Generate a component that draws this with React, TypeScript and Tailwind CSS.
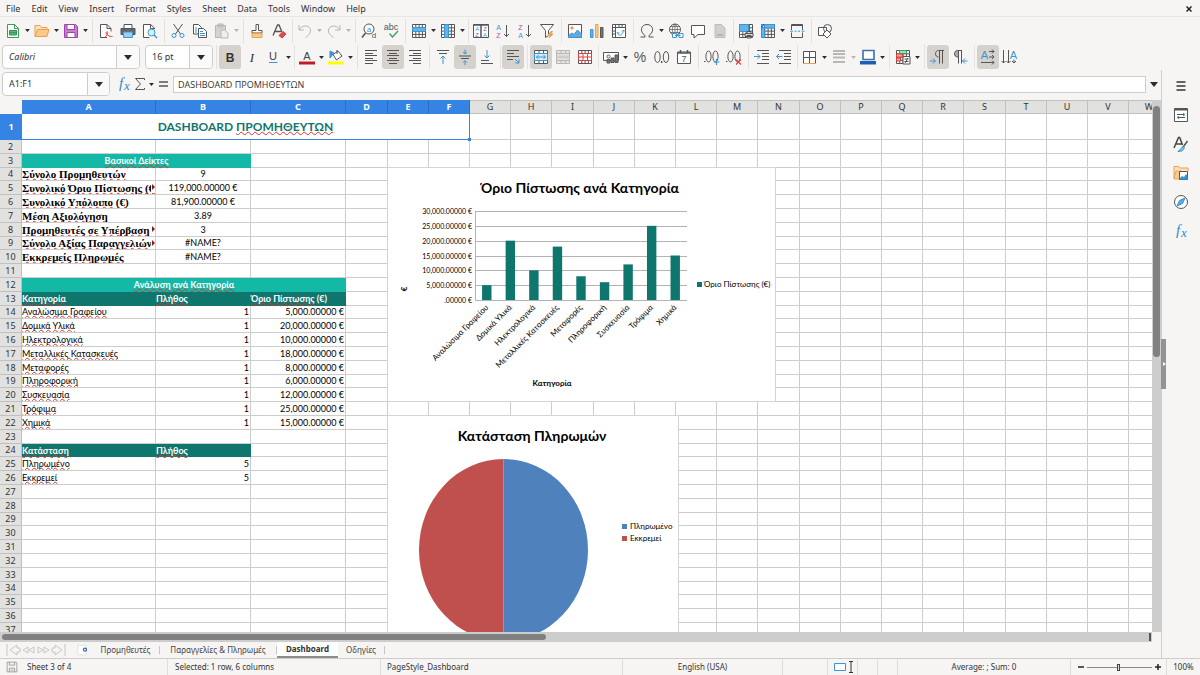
import type { ReactNode } from "react";

const K = "#555555";
const B = "#3a95d2";
const O = "#e9a24a";
const R = "#e0403f";
const P = "#a54fb3";
const G = "#b9b7b5";

const letter = (x: number, y: number, size: number, fill: string, s: string, weight = 400) => (
    <text x={x} y={y} fontSize={size} fill={fill} stroke="none" fontWeight={weight} textAnchor="middle">{s}</text>
);

const gridLines = "M1.5 1.5h13v13h-13zM1.5 4.8h13M1.5 8.1h13M1.5 11.4h13M4.8 1.5v13M8.1 1.5v13M11.4 1.5v13";

const icons: Record<string, ReactNode> = {
    new: <><path d="M2.500 1.500h7l4 4v9h-11z" fill="#fff" stroke="#3c9a5a" /><path d="M9.500 1.500v4h4" stroke="#3c9a5a" /><path d="M4.500 7.500h7v4.500h-7zM4.500 9.700h7" fill="#5fb878" stroke="#2f9350" /></>,
    open: <><path d="M1 13.500V2.500h5l1.500 2H13v2.500" stroke={O} fill="#fbe3bd" /><path d="M1 13.500l2.500-7H15l-2 7z" fill="#fbc98a" stroke={O} /></>,
    save: <><path d="M1.500 1.500h11l2 2v11h-13z" fill="#c77fd0" stroke="#9a45a8" /><path d="M4 1.500h7.500v5H4zM4 9.500h8v5H4z" fill="#fff" stroke="#9a45a8" /></>,
    pdf: <><path d="M9 14.500H2.500v-13H9l4 4v3" stroke={K} fill="#fff" /><path d="M9 1.500v4h4" stroke={K} /><path d="M7 14.500c3-3 3.500-7 1.500-5.500s2.500 5 6 4.500" stroke={R} /></>,
    print: <><path d="M4 5V1.500h8V5" stroke={K} fill="#fff" /><path d="M1 5.500h14v6H1z" fill="#666" stroke={K} /><path d="M3.500 9h9v5.500h-9z" fill="#9bd0f2" stroke={B} /></>,
    preview: <><path d="M12.500 6V5l-4-3.500h-7v13h6" stroke={K} fill="#fff" /><path d="M8.500 1.500v4h4" stroke={K} /><circle cx="9.500" cy="9.500" r="3.500" stroke={B} fill="#d8edfb" /><path d="M12 12l3 3" stroke={B} strokeWidth="1.500" /></>,
    cut: <><path d="M3.500 1l7 10M12.500 1l-7 10" stroke={K} /><circle cx="4" cy="12.500" r="2" stroke={B} /><circle cx="12" cy="12.500" r="2" stroke={B} /></>,
    copy: <><path d="M1.500 1.500h5l3 3v6.500h-8z" fill="#fff" stroke={K} /><path d="M6.500 5.500h5l3 3v6h-8z" fill="#fff" stroke={K} /><path d="M8 8.500h3M8 10.500h5M8 12.500h5M3 5h2M3 7h2M3 9h2" stroke={B} /></>,
    paste: <><path d="M1.500 2.500h10v12h-10zM4 1h5v3H4z" fill="#d5d3d1" stroke={G} /><path d="M7 7h4l3 3v5H7z" fill="#eee" stroke={G} /></>,
    clone: <><path d="M7 1.500h2.500v6h3.500v2.500H3V7.500h4z" stroke={K} fill="#fff" /><path d="M3 10.500h10v4H3z" fill="#fbc98a" stroke={O} /></>,
    clear: <><path d="M2 12.500L6.500 2h1.500l3 7M4 8.500h6" stroke={K} strokeWidth="1.300" /><path d="M8 12.500l4-4 3 2.500-4 4z" fill="#e8454a" stroke={R} /></>,
    undo: <path d="M2 2v5h5M2 7c3-6 12-5 11.500 1 0 3-2.500 4.500-5 6.500" stroke={G} />,
    redo: <path d="M14 2v5H9M14 7C11 1 2 2 2.500 8c0 3 2.500 4.500 5 6.500" stroke={G} />,
    find: <><circle cx="8" cy="6" r="5" stroke={K} fill="#fff" /><path d="M4.500 10L1 14.500" stroke={K} strokeWidth="1.600" />{letter(8, 8.500, 8, B, "a")}{letter(13, 15, 8, K, "d")}</>,
    spell: <>{letter(8, 6.500, 9, K, "abc")}<path d="M6.500 10.500l3 3.500L15 8" stroke="#36a15b" strokeWidth="1.300" /></>,
    row: <><path d={gridLines} stroke={K} fill="#fff" /><path d="M1.500 4.500h13v4h-13z" fill="#62b4e8" stroke={B} /></>,
    col: <><path d={gridLines} stroke={K} fill="#fff" /><path d="M4.500 1.500h4v13h-4z" fill="#62b4e8" stroke={B} /></>,
    sort: <><path d="M.5 1.500h15v13H.5z" fill="#fff" stroke={K} /><path d="M.5 2h15M8 2v13" stroke={K} strokeWidth="1.500" />{letter(4.200, 7.500, 6, B, "A")}{letter(4.200, 14, 6, P, "Z")}{letter(12, 7.500, 6, P, "Z")}{letter(12, 14, 6, B, "A")}</>,
    asc: <>{letter(3.500, 6.500, 7, B, "A")}{letter(3.500, 15, 7, P, "Z")}<path d="M11.500 2v11.500M9 11l2.500 2.500L14 11" stroke={K} /></>,
    desc: <>{letter(3.500, 6.500, 7, P, "Z")}{letter(3.500, 15, 7, B, "A")}<path d="M11.500 2v11.500M9 11l2.500 2.500L14 11" stroke={K} /></>,
    filter: <><path d="M1.500 1.500h13l-5 6v5l-3 2v-7z" stroke={K} fill="#fff" /><path d="M12 8.500l-3 3.500h2.500L10 15l4-4h-2.500l2-2.500z" fill={O} stroke={O} /></>,
    image: <><path d="M1.500 1.500h13v13h-13z" fill="#fff" stroke={K} /><circle cx="5" cy="5" r="1.200" fill={O} stroke={O} /><path d="M1.500 12.500L5 10l2 1.500L10.500 7l4 4v3.500h-13z" fill="#62a9dd" stroke={B} /></>,
    chart: <><path d="M1.500 6.500h2.500v8H1.500z" fill="#62b4e8" stroke={B} /><path d="M6.500 1.500H9v13H6.500z" fill="#fbc98a" stroke={O} /><path d="M11.500 4.500H14v10h-2.500z" fill="#777" stroke={K} /></>,
    pivot: <><path d="M1.500 1.500h13v13h-13zM1.500 4.500h13M4.500 1.500v13M8 1.500v3M11 1.500v3M1.500 8h3M1.500 11h3" fill="#fff" stroke={K} /><path d="M7 10.500c0 3 5 2 5.500-3.500M11 8.500L12.500 7 14 8.500M8.500 9L7 10.500 5.700 9" stroke={B} /></>,
    omega: <path d="M1.500 14h4.500v-1.500C0 8.500 2 1.500 8 1.500s8 7 2 11V14h4.500" stroke={K} />,
    link: <><circle cx="7" cy="6.500" r="5.500" stroke={K} fill="#fff" /><path d="M1.500 6.500h11M7 1v11M3 3.500h8M3 9.500h8M7 1c-3.500 3-3.500 8 0 11M7 1c3.500 3 3.500 8 0 11" stroke={K} strokeWidth=".7" /><path d="M4.500 10.500h4v4h-4zM11 10.500h4v4h-4zM7 12.500h5.500" fill="#fff" stroke={B} /></>,
    comment: <path d="M1.500 2.500h13v9H8l-4 3.500v-3.500H1.500z" fill="#fff" stroke={K} />,
    header: <><path d="M3 1.500h6.500L13 5v9.500H3z" fill="#d2d0ce" stroke="#c0bebc" /><path d="M5 11h6v2H5z" fill="#b8b6b4" /></>,
    printarea: <><path d={gridLines} stroke={K} fill="#fff" /><path d="M1.500 1.500h9v7h-9z" fill="#62b4e8" stroke={B} /><path d="M7 10.500h8v3H7zM9 8.500h4v2H9zM9 12.500h4V15H9z" fill="#ddd" stroke={K} /></>,
    freeze: <><path d={gridLines} stroke={K} fill="#fff" /><path d="M4.500 1.500h10v3.500h-10zM1.500 5h3v9.500h-3z" fill="#62b4e8" stroke={B} /><path d="M1 2.500h3M2.500 1v3" stroke={B} /></>,
    split: <><path d="M2.500 7V1.500h11V7M2.500 9.500v5h11v-5M2.500 2.500h11" stroke={K} /><path d="M1 8.200h3M5.500 8.200h2M9 8.200h2M12.500 8.200h3" stroke={B} /></>,
    shapes: <><path d="M1.500 4.500h8v8h-8z" fill="#fff" stroke={K} /><circle cx="10.500" cy="5.500" r="4" stroke={K} /><path d="M10 7l4 4-4 4-4-4z" fill="#fff" stroke={K} /></>,
    bold: letter(8, 12.500, 12, "#333", "B", 700),
    italic: <text x="8" y="12.500" fontSize="13" fill="#333" stroke="none" textAnchor="middle" fontFamily="Liberation Serif" fontStyle="italic">I</text>,
    underline: <>{letter(7, 11, 11, "#444", "U")}<path d="M3 13.500h8.500" stroke={B} /></>,
    color: <>{letter(8, 10.500, 11, "#444", "A")}<path d="M0 12.500h16v3H0z" fill="#c01c28" /></>,
    highlight: <><path d="M5 5.500L10 2l4 5-5.500 4z" fill="#fff" stroke={K} /><path d="M9 5V1" stroke={K} /><path d="M2 2v7l4-5z" fill={B} stroke={B} /><path d="M0 12.500h16v3H0z" fill="#ffff00" /></>,
    left: <path d="M2 1.500h12M2 4.500h8M2 6.500h12M2 9.500h8M2 11.500h12M2 14.500h8" stroke={K} />,
    center: <path d="M2 1.500h12M4 4.500h8M2 6.500h12M4 9.500h8M2 11.500h12M4 14.500h8" stroke={K} />,
    right: <path d="M2 1.500h12M6 4.500h8M2 6.500h12M6 9.500h8M2 11.500h12M6 14.500h8" stroke={K} />,
    top: <><path d="M2 1.500h12M4 4.500h8" stroke={K} /><path d="M8 15V7M5.500 9.500L8 7l2.500 2.500" stroke={B} /></>,
    middle: <><path d="M2 7h12M4 9.500h8" stroke={K} /><path d="M8 .5v4M6 3l2 2 2-2M8 16v-4M6 13.500l2-2 2 2" stroke={B} /></>,
    bottom: <><path d="M2 11.500h8M2 14.500h12" stroke={K} /><path d="M8 1v8M5.500 6.500L8 9l2.500-2.500" stroke={B} /></>,
    wrap: <><path d="M2 1.500h12M2 4.500h7M2 7.500h12M2 10.500h6" stroke={K} /><path d="M10 10l4 4M14 10.500V14h-3.500" stroke={B} /></>,
    merge: <><path d="M1.500 1.500h13v13h-13zM1.500 4.500h13M1.500 11.500h13M6 1.500v3M10.500 1.500v3M6 11.500v3M10.500 11.500v3" fill="#fff" stroke={K} /><path d="M1.500 4.500h13v7h-13z" fill="#d8edfb" stroke={B} /><path d="M3.500 8h9M5.500 6l-2 2 2 2M10.500 6l2 2-2 2" stroke={B} /></>,
    unmerge: <><path d="M1.500 1.500h13v13h-13zM1.500 4.500h13M1.500 11.500h13M6 1.500v3M10.500 1.500v3M6 11.500v3M10.500 11.500v3" fill="#e5e3e1" stroke={G} /><path d="M1.500 6.500h13v3h-13z" fill="#cfcdcb" /></>,
    cells: <><path d={gridLines} stroke={K} fill="#fff" /><path d="M1.500 4.500h13v7h-13zM1.500 8h13M6 4.500v7M10.500 4.500v7" fill="#fff" stroke={R} /></>,
    currency: <><path d="M.5 3.500h15v8H.5z" fill="#fff" stroke={K} /><circle cx="5.500" cy="7.500" r="1.500" stroke={K} /><path d="M8 9h3v4.500H8zM12 6h3v7.500h-3zM4 10.500h3V14H4z" fill="#777" stroke={K} /></>,
    percent: letter(8, 13, 14, K, "%"),
    number: <><ellipse cx="3.500" cy="8" rx="2.700" ry="5.500" stroke={K} /><ellipse cx="12" cy="8" rx="2.700" ry="5.500" stroke={K} /><path d="M7.700 12v2" stroke={K} strokeWidth="1.400" /></>,
    date: <><path d="M1.500 3h13v11.500h-13z" fill="#fff" stroke={K} /><path d="M1.500 4h13M4.500 1v3M11.500 1v3" stroke={K} strokeWidth="1.500" />{letter(8, 13, 9, K, "7")}</>,
    adddec: <><ellipse cx="4.500" cy="7.500" rx="2.600" ry="5.500" stroke={K} /><ellipse cx="11.500" cy="7.500" rx="2.600" ry="5.500" stroke={K} /><path d="M0 12.500h1.500" stroke={K} /><path d="M12.500 10v6M9.500 13h6" stroke={B} strokeWidth="1.200" /></>,
    deldec: <><ellipse cx="4.500" cy="7.500" rx="2.600" ry="5.500" stroke={K} /><ellipse cx="11.500" cy="7.500" rx="2.600" ry="5.500" stroke={K} /><path d="M0 12.500h1.500" stroke={K} /><path d="M10 10.500l5 5M15 10.500l-5 5" stroke={R} strokeWidth="1.200" /></>,
    indent: <><path d="M3 1.500h12M8 4.500h7M8 7.500h7M8 10.500h7M3 14.500h12" stroke={K} /><path d="M0 7.500h6M3.500 5L6 7.500 3.500 10" stroke={B} /></>,
    outdent: <><path d="M3 1.500h12M8 4.500h7M8 7.500h7M8 10.500h7M3 14.500h12" stroke={K} /><path d="M.5 7.500h6M3 5L.5 7.500 3 10" stroke={B} /></>,
    borders: <><path d="M1.500 14V2.500h12V14M7.500 2.500V14M1.500 8.500h12" fill="#fff" stroke={K} /><path d="M1 14.500h13" stroke={O} /></>,
    style: <path d="M2 2h12M2 5h12M2 8.500h12M2 13h12" stroke={G} strokeWidth="1.800" />,
    bcolor: <><path d="M3 1.500h11v9H3z" fill="#fff" stroke="#3b6fae" strokeWidth="1.600" /><path d="M0 12h16v3.500H0z" fill="#1a5fb4" /></>,
    cond: <><path d={gridLines} stroke={K} fill="#fff" /><path d="M4.500 1.500h7v3h-7z" fill="#a8dcb4" stroke="#36a15b" /><path d="M1.500 5h6v3h-6zM1.500 9h4v3h-4z" fill="#f5a3a0" stroke={R} /><path d="M8 7.500h7v7.500H8zM9.500 10h4M9.500 12.500h4M13 9l-3 5" fill="#fff" stroke={K} /></>,
    ltr: <><path d="M14 1.500H8.500C4.500 1.500 4.500 8 8.500 8M9.500 1.500v13M12.500 1.500v13" stroke={K} /><path d="M0 12h5M3 9.500L5.500 12 3 14.500" stroke={B} /></>,
    rtl: <><path d="M10 1.500H5.500C1.500 1.500 1.500 8 5.500 8h1V1.500z" fill="#aaa" stroke={K} /><path d="M6.500 1.500v13M9.500 1.500v13" stroke={K} /><path d="M15.500 12h-5M13 9.500L10.500 12l2.500 2.500" stroke={B} /></>,
    horiz: <>{letter(4.500, 10, 11, B, "A")}<path d="M9 2.500h5M12 .500l2 2-2 2M9 8h5M12 6l2 2-2 2M1 13.500h13M12 11.500l2 2-2 2" stroke={K} /></>,
    vert: <>{letter(11.500, 10, 11, B, "A")}<path d="M1.500 1v13M-.5 12l2 2 2-2M6.500 1v13M4.500 12l2 2 2-2M12 10.500V14M10 12l2 2 2-2" stroke={K} /></>,
    menu: <path d="M3.500 4h9M3.500 8h9M3.500 12h9" stroke="#333" strokeWidth="1.300" />,
    props: <><path d="M1.500 1.500h13v13h-13z" fill="#fff" stroke={K} /><path d="M1.500 2.500h13" stroke={K} strokeWidth="2" /><path d="M4 7.500h7M5 10.500h7" stroke={K} /><path d="M10 6l2 1.500L10 9M6 9L4 10.500 6 12" stroke={B} /></>,
    styles: <><path d="M1 12L5.500 1.500h1.200L9.500 9M3 8h6" stroke="#444" strokeWidth="1.500" /><path d="M14.500 5l-5 7" stroke={K} strokeWidth="1.500" /><path d="M10 10.500l1.500 1.500-2.500 3-4 .5z" fill="#8cc6ee" stroke={B} /></>,
    gallery: <><path d="M1 13V1.500h4.500l1 1.500H15v3" stroke={O} fill="#fbe3bd" /><path d="M1 13l2-7h5v8H1z" fill="#fbc98a" stroke={O} /><path d="M6.500 6.500h8v8h-8z" fill="#fff" stroke={K} /><path d="M6.500 13.500l2.500-2.500 2 1 2-3 1.500 2v3.500h-8z" fill={B} /></>,
    navigator: <><circle cx="8" cy="8" r="6.500" stroke={K} fill="#fff" /><path d="M12 4l-2.500 5.500L4 12l2.500-5.500z" fill="#5aa9e6" stroke={B} /></>,
    fx: <><text x="5" y="12" fontSize="15" fill="#2e8bd0" stroke="none" textAnchor="middle" fontFamily="Liberation Serif" fontStyle="italic">f</text><text x="11" y="13.500" fontSize="13" fill="#2e8bd0" stroke="none" textAnchor="middle" fontFamily="Liberation Serif" fontStyle="italic">x</text></>,
    sum: <path d="M12.500 4V2.500h-9l5 5.500-5 5.500h9V12" stroke={K} />,
    equals: <path d="M4 6h9M4 10h9" stroke={K} strokeWidth="1.600" />,
    disk: <path d="M1.500 1.500h12l1 1v12h-13zM4.500 1.500v4h7v-4M4.500 14.500v-5h7v5M6.500 12h3.500" stroke="#8a8886" />,
    sheet: <><path d="M2.500 1.500h11v13h-11z" fill="#fff" stroke="#dcdad8" /><circle cx="12" cy="7.500" r="2" stroke="#2560a8" strokeWidth="1.500" /></>,
};

function Icon({ name, small }: { name: string; small?: boolean }) {
    return (
        <svg viewBox="0 0 16 16" className={`shrink-0 overflow-visible ${small ? "size-3" : "size-4"}`} fill="none" fontFamily="Liberation Sans">
            {icons[name]}
        </svg>
    );
}

function Caret({ off, large }: { off?: boolean; large?: boolean }) {
    return (
        <svg viewBox="0 0 8 5" className={large ? "h-[5px] w-2" : "h-[3px] w-[5px]"}>
            <path d="M0 0h8L4 5z" fill={off ? "#b5b3b1" : "#2b2b2b"} />
        </svg>
    );
}

type Tool = { icon: string; label: string; menu?: boolean; on?: boolean; off?: boolean };
type Item = Tool | "|" | "¦";

const t = (icon: string, label: string, opts: Partial<Tool> = {}): Tool => ({ icon, label, ...opts });

// "|" is a normal divider, "¦" a narrow one
const standardBar: Item[] = [
    t("new", "New", { menu: true }), t("open", "Open", { menu: true }), t("save", "Save", { menu: true }), "|",
    t("pdf", "Export as PDF"), t("print", "Print"), t("preview", "Print Preview"), "|",
    t("cut", "Cut"), t("copy", "Copy"), t("paste", "Paste", { menu: true, off: true }), "|",
    t("clone", "Clone Formatting"), t("clear", "Clear Formatting"), "¦",
    t("undo", "Undo", { menu: true, off: true }), t("redo", "Redo", { menu: true, off: true }), "|",
    t("find", "Find and Replace"), t("spell", "Spelling"), "|",
    t("row", "Row", { menu: true }), t("col", "Column", { menu: true }), "¦",
    t("sort", "Sort"), t("asc", "Sort Ascending"), t("desc", "Sort Descending"), t("filter", "AutoFilter"), "|",
    t("image", "Insert Image"), t("chart", "Insert Chart"), t("pivot", "Insert Pivot Table"), "|",
    t("omega", "Special Character", { menu: true }), t("link", "Hyperlink"), t("comment", "Comment"), t("header", "Headers and Footers", { off: true }), "¦",
    t("printarea", "Define Print Area"), t("freeze", "Freeze Rows and Columns", { menu: true }), t("split", "Split Window"), "|",
    t("shapes", "Draw Functions"),
];

const formatBar: Item[] = [
    "|", t("bold", "Bold", { on: true }), t("italic", "Italic"), t("underline", "Underline", { menu: true }), "¦",
    t("color", "Font Color", { menu: true }), t("highlight", "Background Color", { menu: true }), "|",
    t("left", "Align Left"), t("center", "Center", { on: true }), t("right", "Align Right"), "|",
    t("top", "Align Top"), t("middle", "Center Vertically", { on: true }), t("bottom", "Align Bottom"), "¦",
    t("wrap", "Wrap Text", { on: true }), "|",
    t("merge", "Merge and Center", { on: true }), t("unmerge", "Merge Cells", { off: true }), t("cells", "Unmerge Cells"), "¦",
    t("currency", "Currency", { menu: true }), t("percent", "Percent"), t("number", "Number"), t("date", "Date"), "|",
    t("adddec", "Add Decimal Place"), t("deldec", "Delete Decimal Place"), "|",
    t("indent", "Increase Indent"), t("outdent", "Decrease Indent"), "¦",
    t("borders", "Borders", { menu: true }), t("style", "Border Style", { menu: true, off: true }), t("bcolor", "Border Color", { menu: true }), "|",
    t("cond", "Conditional", { menu: true }), "|",
    t("ltr", "Left-To-Right", { on: true }), t("rtl", "Right-To-Left"), "|",
    t("horiz", "Text direction left to right", { on: true }), t("vert", "Text direction top to bottom"),
];

function Tools({ items }: { items: Item[] }) {
    return (
        <>
            {items.map((item, i) => {
                if (item === "|" || item === "¦") {
                    return (
                        <div key={i} className={`flex h-6 shrink-0 justify-center ${item === "|" ? "w-1.5" : "w-1"}`}>
                            <div className="w-px bg-[#e4e2e0]" />
                        </div>
                    );
                }
                return (
                    <div key={i} className="flex shrink-0 items-center">
                        <button
                            aria-label={item.label}
                            disabled={item.off}
                            className={`flex h-6 w-[22px] items-center justify-center rounded-[3px] ${item.on ? "bg-[#d5d1cd]" : ""}`}
                        >
                            <Icon name={item.icon} />
                        </button>
                        {item.menu && (
                            <button aria-label={`${item.label} options`} disabled={item.off} className="flex h-6 w-[7px] items-center justify-center">
                                <Caret off={item.off} />
                            </button>
                        )}
                    </div>
                );
            })}
        </>
    );
}

function Combo({ label, value, width, italic }: { label: string; value: string; width: string; italic?: boolean }) {
    return (
        <div className={`relative flex h-6 shrink-0 items-center overflow-hidden rounded border border-[#cfccc9] bg-white ${width}`}>
            <select aria-label={label} className={`h-full w-full appearance-none pl-1.5 text-[9px] outline-none ${italic ? "italic" : ""}`}>
                <option>{value}</option>
            </select>
            <span className="pointer-events-none absolute inset-y-0 right-0 flex w-[23px] items-center justify-center border-l border-[#cfccc9] bg-[#fbfafa]">
                <Caret large />
            </span>
        </div>
    );
}

const menus = ["File", "Edit", "View", "Insert", "Format", "Styles", "Sheet", "Data", "Tools", "Window", "Help"];
const columns = "ABCDEFGHIJKLMNOPQRSTUVW".split("");

function columnWidth(i: number) {
    if (i === 0) return 134;
    if (i < 3) return 95;
    return i % 5 === 3 ? 42 : 41;
}

const indicators: [string, string, boolean][] = [
    ["Σύνολο Προμηθευτών", "9", false],
    ["Συνολικό Όριο Πίστωσης (€)", "119,000.00000 €", true],
    ["Συνολικό Υπόλοιπο (€)", "81,900.00000 €", false],
    ["Μέση Αξιολόγηση", "3.89", false],
    ["Προμηθευτές σε Υπέρβαση", "3", true],
    ["Σύνολο Αξίας Παραγγελιών", "#NAME?", true],
    ["Εκκρεμείς Πληρωμές", "#NAME?", false],
];

const categories: [string, number][] = [
    ["Αναλώσιμα Γραφείου", 5000],
    ["Δομικά Υλικά", 20000],
    ["Ηλεκτρολογικά", 10000],
    ["Μεταλλικές Κατασκευές", 18000],
    ["Μεταφορές", 8000],
    ["Πληροφορική", 6000],
    ["Συσκευασία", 12000],
    ["Τρόφιμα", 25000],
    ["Χημικά", 15000],
];

const statuses = ["Πληρωμένο", "Εκκρεμεί"];

const euro = (n: number) => (n ? n.toLocaleString("en-US") : "") + ".00000 €";

function Typo({ children }: { children: ReactNode }) {
    return <span className="underline decoration-[#e0302a] decoration-wavy decoration-1 underline-offset-0 [text-decoration-skip-ink:none]">{children}</span>;
}

const cell = "overflow-hidden whitespace-nowrap border-b border-r border-[#cdcdcd] p-0 leading-3";

function Blank({ from }: { from: number }) {
    return <>{columns.slice(from).map((c) => <td key={c} className={cell} />)}</>;
}

function rowCells(n: number) {
    if (n === 1) {
        return (
            <>
                <td colSpan={6} className="relative border-b border-r border-[#3584e4] p-0 text-center text-[12px] font-bold leading-4 text-[#0f766e]">
                    DASHBOARD <Typo>ΠΡΟΜΗΘΕΥΤΩΝ</Typo>
                    <span className="absolute -bottom-0.5 -right-0.5 size-[3px] bg-[#3584e4]" />
                </td>
                <Blank from={6} />
            </>
        );
    }
    if (n === 3) {
        return (
            <>
                <td colSpan={2} className="bg-[#14b8a6] p-0 text-center font-bold leading-3 text-white"><Typo>Βασικοί</Typo> <Typo>Δείκτες</Typo></td>
                <Blank from={2} />
            </>
        );
    }
    if (n >= 4 && n <= 10) {
        const [name, value, cut] = indicators[n - 4];
        return (
            <>
                <td className={`${cell} relative font-['Liberation_Serif',serif] text-[11px] font-bold`}>
                    <Typo>{name}</Typo>
                    {cut && (
                        <svg viewBox="0 0 4 12" className="absolute right-0 top-0 h-3 w-1"><path d="M0 0h4v12H0z" fill="#fff" /><path d="M1 3l3 3-3 3z" fill="#8b1a1a" /></svg>
                    )}
                </td>
                <td className={`${cell} text-center`}>{value}</td>
                <Blank from={2} />
            </>
        );
    }
    if (n === 12) {
        return (
            <>
                <td colSpan={3} className="bg-[#14b8a6] p-0 text-center font-bold leading-3 text-white"><Typo>Ανάλυση</Typo> <Typo>ανά</Typo> <Typo>Κατηγορία</Typo></td>
                <Blank from={3} />
            </>
        );
    }
    if (n === 13 || n === 24) {
        const heads = n === 13 ? ["Κατηγορία", "Πλήθος", "Όριο Πίστωσης"] : ["Κατάσταση", "Πλήθος"];
        return (
            <>
                {heads.map((h) => (
                    <td key={h} className="bg-[#0f766e] p-0 font-bold leading-3 text-white">
                        <Typo>{h}</Typo>{h === "Όριο Πίστωσης" && " (€)"}
                    </td>
                ))}
                <Blank from={heads.length} />
            </>
        );
    }
    if (n >= 14 && n <= 22) {
        const [name, amount] = categories[n - 14];
        return (
            <>
                <td className={cell}><Typo>{name}</Typo></td>
                <td className={`${cell} pr-px text-right`}>1</td>
                <td className={`${cell} pr-px text-right`}>{euro(amount)}</td>
                <Blank from={3} />
            </>
        );
    }
    if (n === 25 || n === 26) {
        return (
            <>
                <td className={cell}><Typo>{statuses[n - 25]}</Typo></td>
                <td className={`${cell} pr-px text-right`}>5</td>
                <Blank from={2} />
            </>
        );
    }
    return <Blank from={0} />;
}

function Grid() {
    const rows = Array.from({ length: 37 }, (_, i) => i + 1);
    const width = 22 + columns.reduce((sum, _, i) => sum + columnWidth(i), 0);
    return (
        <table className="table-fixed border-separate border-spacing-0 bg-white font-[Lato,'Noto_Sans',sans-serif] text-[9px] text-black" style={{ width }}>
            <colgroup>
                <col className="w-[22px]" />
                {columns.map((c, i) => <col key={c} style={{ width: columnWidth(i) }} />)}
            </colgroup>
            <thead>
                <tr className="h-3.5 font-['Noto_Sans',sans-serif]">
                    <th className="bg-[#f6f5f4] p-0" />
                    {columns.map((c, i) => (
                        <th key={c} className={`border-r p-0 leading-3 ${i < 6 ? "border-[#2a6fc4] bg-[#3584e4] font-bold text-white" : "border-b border-t border-[#c0c0c0] bg-[#e1e1e0] font-normal text-[#333]"}`}>
                            {c}
                        </th>
                    ))}
                </tr>
            </thead>
            <tbody>
                {rows.map((n) => (
                    <tr key={n} className={n === 1 ? "h-[26px]" : n % 5 === 4 ? "h-[13px]" : "h-3.5"}>
                        <th className={`p-0 font-['Noto_Sans',sans-serif] leading-3 ${n === 1 ? "bg-[#3584e4] font-bold text-white" : "border-b border-r border-[#c0c0c0] bg-[#e1e1e0] font-normal text-[#333]"}`}>
                            {n}
                        </th>
                        {rowCells(n)}
                    </tr>
                ))}
            </tbody>
        </table>
    );
}

function BarChart() {
    const left = 88, right = 300, top = 44, base = 133;
    const step = (right - left) / categories.length;
    const y = (v: number) => base - (v / 30000) * (base - top);
    return (
        <svg viewBox="0 0 389 235" className="absolute left-[387px] top-[67px] h-[235px] w-[389px] font-[Lato,'Noto_Sans',sans-serif]" fontSize="8">
            <rect x=".5" y=".5" width="388" height="234" fill="#fff" stroke="#d4d4d4" />
            <text x="193" y="26" fontSize="14" fontWeight="700" textAnchor="middle">Όριο Πίστωσης ανά Κατηγορία</text>
            {[0, 5000, 10000, 15000, 20000, 25000, 30000].map((v) => (
                <g key={v}>
                    <path d={`M${left} ${Math.round(y(v)) + 0.5}H${right}`} stroke="#b3b3b3" />
                    <text x="85" y={y(v) + 3} fontSize="7" textAnchor="end">{euro(v)}</text>
                </g>
            ))}
            <path d={`M${left + 0.5} ${top}V${base}`} stroke="#b3b3b3" />
            {categories.map(([name, v], i) => {
                const x = left + step * (i + 0.5);
                return (
                    <g key={name}>
                        <rect x={x - 4.7} y={y(v)} width="9.400" height={base - y(v)} fill="#0f766e" />
                        <text transform={`translate(${x + 2} 141) rotate(-45)`} textAnchor="end">{name}</text>
                    </g>
                );
            })}
            <text transform="translate(20 122) rotate(-90)" fontWeight="700" textAnchor="middle">€</text>
            <text x="165" y="219" fontWeight="700" textAnchor="middle">Κατηγορία</text>
            <rect x="310" y="115" width="5" height="5" fill="#0f766e" />
            <text x="317" y="120">Όριο Πίστωσης (€)</text>
        </svg>
    );
}

function PieChart() {
    return (
        <svg viewBox="0 0 292 250" className="absolute left-[387px] top-[315px] h-[250px] w-[292px] font-[Lato,'Noto_Sans',sans-serif]" fontSize="8">
            <rect x=".5" y=".5" width="291" height="249" fill="#fff" stroke="#d4d4d4" />
            <text x="145" y="26" fontSize="14" fontWeight="700" textAnchor="middle">Κατάσταση Πληρωμών</text>
            <path d="M116.500 44a84.500 91 0 0 0 0 182z" fill="#c0504d" />
            <path d="M116.500 44a84.500 91 0 0 1 0 182z" fill="#4f81bd" />
            {statuses.map((s, i) => (
                <g key={s}>
                    <rect x="235" y={109 + i * 12} width="5" height="5" fill={i ? "#c0504d" : "#4f81bd"} />
                    <text x="243" y={114 + i * 12}>{s}</text>
                </g>
            ))}
        </svg>
    );
}

function SheetTabs() {
    const tab = "border-r border-[#c9c7c5] my-1 leading-2";
    return (
        <div className="flex h-4 shrink-0 items-stretch text-[8px] text-[#444]">
            <div className="flex w-[72px] items-center pl-1.5">
                <svg viewBox="0 0 60 12" className="h-3 w-[60px]" fill="none" stroke="#c8c6c4">
                    <path d="M1 0v12M11 1L4 6l7 5V8h3V4h-3zM22 3l-5 3 5 3zM28 3l-5 3 5 3zM32 3l5 3-5 3zM38 3l5 3-5 3zM49 1l7 5-7 5V8h-3V4h3zM59 0v12" />
                </svg>
            </div>
            <button aria-label="Add sheet" className="flex w-5 items-center justify-center"><Icon name="sheet" small /></button>
            <div className="flex items-stretch whitespace-nowrap">
                <button className={`${tab} w-[68px]`}>Προμηθευτές</button>
                <button className={`${tab} w-[117px]`}>Παραγγελίες &amp; Πληρωμές</button>
                <button className="w-[61px] border-b-2 border-[#8c8c8c] bg-white font-bold text-[#333]">Dashboard</button>
                <button className={`${tab} w-[47px]`}>Οδηγίες</button>
            </div>
        </div>
    );
}

function StatusBar() {
    const part = "flex items-center border-r border-[#e0dedc]";
    return (
        <footer className="grid h-[17px] shrink-0 grid-cols-[168fr_213fr_242fr_160fr_45px_30px_20px_20px_173fr_96px_33px] whitespace-nowrap border-t border-[#cfcdcb] text-[8px] leading-3 text-[#333]">
            <div className={`${part} gap-[9px] pl-1.5`}><Icon name="disk" small />Sheet 3 of 4</div>
            <div className={`${part} pl-[7px]`}>Selected: 1 row, 6 columns</div>
            <div className={`${part} pl-1.5`}>PageStyle_Dashboard</div>
            <div className={`${part} justify-center`}>English (USA)</div>
            <div className={part} />
            <div className={`${part} justify-center`}>
                <svg viewBox="0 0 20 12" className="h-3 w-5" fill="none">
                    <path d="M1.500 2.500h11v7h-11z" fill="#fff" stroke={B} />
                    <path d="M16 .5h4M16 11.500h4M18 .5v11" stroke="#333" />
                </svg>
            </div>
            <div className={part} />
            <div className={part} />
            <div className={`${part} justify-center`}>Average: ; Sum: 0</div>
            <div className={`${part} justify-between pl-1.5 pr-1`}>
                <button aria-label="Zoom out" className="flex w-2 items-center"><svg viewBox="0 0 8 8" className="size-2"><path d="M1 4h6" stroke="#222" strokeWidth="1.500" /></svg></button>
                <input
                    type="range"
                    aria-label="Zoom"
                    defaultValue={48}
                    className="h-3 w-[65px] appearance-none bg-transparent [&::-webkit-slider-runnable-track]:h-px [&::-webkit-slider-runnable-track]:bg-[#8a8a8a] [&::-webkit-slider-thumb]:-mt-[3px] [&::-webkit-slider-thumb]:h-[7px] [&::-webkit-slider-thumb]:w-[3px] [&::-webkit-slider-thumb]:appearance-none [&::-webkit-slider-thumb]:border [&::-webkit-slider-thumb]:border-[#444] [&::-webkit-slider-thumb]:bg-[#ddd]"
                />
                <button aria-label="Zoom in" className="flex w-2 items-center"><svg viewBox="0 0 8 8" className="size-2"><path d="M1 4h6M4 1v6" stroke="#222" strokeWidth="1.500" /></svg></button>
            </div>
            <div className="flex items-center justify-center">100%</div>
        </footer>
    );
}

export default function App() {
    return (
        <div className="flex h-screen flex-col overflow-hidden bg-[#f6f5f4] font-['Noto_Sans',sans-serif] text-[#333]">
            <header className="flex h-[17px] shrink-0 items-center justify-between border-b border-[#e9e7e5] pl-1.5 pr-2 pt-px">
                <nav className="flex gap-[11px] text-[9px] leading-4">
                    {menus.map((m) => <button key={m}>{m}</button>)}
                </nav>
                <button aria-label="Close document">
                    <svg viewBox="0 0 6 6" className="size-1.5"><path d="M.5.5l5 5M5.500.5l-5 5" stroke="#222" strokeWidth="1.500" /></svg>
                </button>
            </header>
            <div className="flex h-[27px] shrink-0 items-center pl-0.5"><Tools items={standardBar} /></div>
            <div className="flex h-[26px] shrink-0 items-center pl-0.5">
                <Combo label="Font name" value="Calibri" width="w-[138px] mr-[5px]" italic />
                <Combo label="Font size" value="16 pt" width="w-[68px]" />
                <Tools items={formatBar} />
            </div>
            <div className="flex min-h-0 flex-1">
                <main className="flex min-w-0 flex-1 flex-col">
                    <div className="mb-0.5 flex h-7 shrink-0 items-center pl-0.5">
                        <div className="flex h-6 w-[108px] overflow-hidden rounded border border-[#cfccc9] bg-white">
                            <input aria-label="Name box" defaultValue="A1:F1" className="w-[84px] pl-1.5 text-[9px] outline-none" />
                            <button aria-label="Name list" className="flex flex-1 items-center justify-center border-l border-[#cfccc9] bg-[#fbfafa]"><Caret large /></button>
                        </div>
                        <div className="flex items-center pl-1.5">
                            <button aria-label="Function wizard"><Icon name="fx" /></button>
                            <button aria-label="Sum"><Icon name="sum" /></button>
                            <button aria-label="Sum options" className="px-px"><Caret /></button>
                            <button aria-label="Formula" className="mr-0.5"><Icon name="equals" /></button>
                        </div>
                        <input
                            aria-label="Formula input"
                            defaultValue="DASHBOARD ΠΡΟΜΗΘΕΥΤΩΝ"
                            className="h-[17px] min-w-0 flex-1 border border-[#cfccc9] bg-white pl-1 font-['Open_Sans',sans-serif] text-[9px] outline-none"
                        />
                        <button aria-label="Expand formula bar" className="flex w-[15px] justify-center"><Caret large /></button>
                    </div>
                    <div className="flex min-h-0 flex-1">
                        <div className="relative min-w-0 flex-1 overflow-hidden bg-white">
                            <Grid />
                            <BarChart />
                            <PieChart />
                        </div>
                        <div className="w-[9px] shrink-0 bg-[#cdcdcd] px-px pt-1.5">
                            <div className="h-[251px] rounded-full bg-[#7f807f]" />
                        </div>
                    </div>
                    <div className="mr-[9px] flex h-2.5 shrink-0 items-center justify-between bg-[#cdcdcd] pl-0.5 pr-px">
                        <div className="h-1.5 w-[544px] rounded-full bg-[#7f807f]" />
                        <div className="h-2 w-0.5 bg-[#555]" />
                    </div>
                    <SheetTabs />
                </main>
                <aside className="relative flex w-[39px] shrink-0 flex-col items-center gap-[13px] border-l border-[#cfcdcb] pt-2">
                    {["menu", "props", "styles", "gallery", "navigator", "fx"].map((name) => (
                        <button key={name} aria-label={name}><Icon name={name} /></button>
                    ))}
                    <button aria-label="Hide sidebar" className="absolute -left-px top-[269px] flex h-[50px] w-[5px] items-center justify-center bg-[#939392]">
                        <svg viewBox="0 0 4 4" className="size-1"><path d="M1 0l3 2-3 2z" fill="#fff" /></svg>
                    </button>
                </aside>
            </div>
            <StatusBar />
        </div>
    );
}
